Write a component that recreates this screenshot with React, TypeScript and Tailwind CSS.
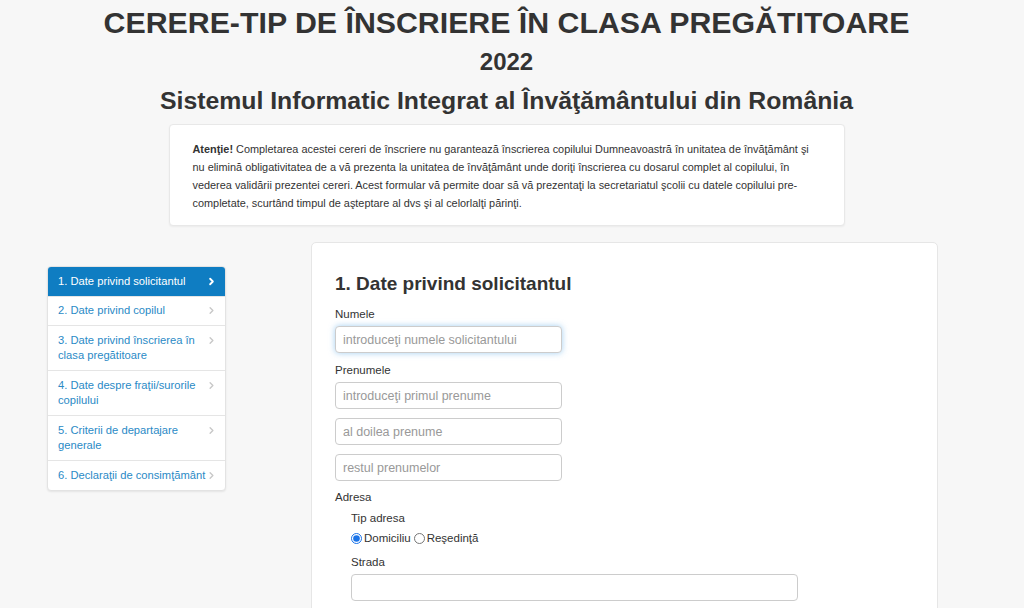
import { ChevronRight } from "lucide-react";

const steps = [
  ["1. Date privind solicitantul"],
  ["2. Date privind copilul"],
  ["3. Date privind înscrierea în", "clasa pregătitoare"],
  ["4. Date despre fraţii/surorile", "copilului"],
  ["5. Criterii de departajare", "generale"],
  ["6. Declaraţii de consimţământ"],
];

const inputCls =
  "block w-[227px] h-[27px] rounded-[4px] border border-[#cccccc] bg-white px-[7px] text-[12.5px] text-[#555] placeholder:text-[#999] outline-none";

export default function App() {
  return (
    <div className="min-h-[608px] bg-[#f7f7f7] text-[#333] font-['Liberation_Sans',Arial,sans-serif] overflow-hidden">
      <div className="w-[1013px]">
        <div className="text-center pt-[5px]">
          <h1 className="text-[30.3px] leading-[36px] font-bold">
            CERERE-TIP DE ÎNSCRIERE ÎN CLASA PREGĂTITOARE
          </h1>
          <h2 className="mt-[6px] text-[24px] leading-[30px] font-bold">2022</h2>
          <h2 className="mt-[9px] text-[24.8px] leading-[30px] font-bold">
            Sistemul Informatic Integrat al Învăţământului din România
          </h2>
        </div>

        <div className="mx-auto mt-[8px] w-[676px] h-[102px] rounded-[4px] border border-[#e8e8e8] bg-white px-[23px] pt-[15px] text-[10.9px] leading-[18px] text-[#333] whitespace-nowrap shadow-[0_1px_2px_rgba(0,0,0,0.05)]">
          <b>Atenţie!</b> Completarea acestei cereri de înscriere nu garantează înscrierea copilului Dumneavoastră în unitatea de învăţământ şi
          <br />
          nu elimină obligativitatea de a vă prezenta la unitatea de învăţământ unde doriţi înscrierea cu dosarul complet al copilului, în
          <br />
          vederea validării prezentei cereri. Acest formular vă permite doar să vă prezentaţi la secretariatul şcolii cu datele copilului pre-
          <br />
          completate, scurtând timpul de aşteptare al dvs şi al celorlalţi părinţi.
        </div>

        <div className="flex items-start mt-[16px] pl-[47px]">
          <nav className="mt-[24px] w-[179px] rounded-[4px] border border-[#e3e3e3] bg-white shadow-[0_1px_2px_rgba(0,0,0,0.08)] overflow-hidden">
            {steps.map((s, i) => (
              <div
                key={s[0]}
                className={
                  i === 0
                    ? "flex items-start justify-between bg-[#0f7dc2] text-white pl-[10px] pr-[8px] py-[6.5px] text-[11.2px] leading-[15.5px]"
                    : "flex items-start justify-between border-t border-[#e5e5e5] text-[#2a8ac6] pl-[10px] pr-[8px] py-[6.5px] text-[11.2px] leading-[15.5px]"
                }
              >
                <span className="whitespace-nowrap">
                  {s[0]}
                  {s[1] && (
                    <>
                      <br />
                      {s[1]}
                    </>
                  )}
                </span>
                <ChevronRight
                  size={11}
                  strokeWidth={i === 0 ? 4 : 3}
                  className={i === 0 ? "mt-[2px] shrink-0 text-white" : "mt-[2px] shrink-0 text-[#c8c8c8]"}
                />
              </div>
            ))}
          </nav>

          <main className="ml-[85px] w-[627px] h-[400px] rounded-[5px] border border-[#e6e6e6] bg-white pl-[23px] pt-[29px]">
            <h3 className="text-[19px] leading-[24px] font-bold text-[#333]">1. Date privind solicitantul</h3>
            <label className="block mt-[11px] text-[11.5px] leading-[14px]">Numele</label>
            <input
              className={inputCls + " mt-[5px] border-[#66afe9] shadow-[0_0_6px_rgba(102,175,233,0.6)]"}
              placeholder="introduceţi numele solicitantului"
            />
            <label className="block mt-[10px] text-[11.5px] leading-[14px]">Prenumele</label>
            <input className={inputCls + " mt-[5px]"} placeholder="introduceţi primul prenume" />
            <input className={inputCls + " mt-[9px]"} placeholder="al doilea prenume" />
            <input className={inputCls + " mt-[9px]"} placeholder="restul prenumelor" />
            <div className="mt-[9px] text-[11.5px] leading-[14px]">Adresa</div>
            <div className="pl-[16px]">
              <div className="mt-[7px] text-[11.5px] leading-[14px]">Tip adresa</div>
              <div className="mt-[6px] flex items-center text-[11.5px] leading-[14px]">
                <input type="radio" name="tip" defaultChecked className="m-0 mr-[2px] w-[11px] h-[11px] accent-[#1a73e8]" />
                <span>Domiciliu</span>
                <input type="radio" name="tip" className="m-0 ml-[3px] mr-[2px] w-[11px] h-[11px]" />
                <span>Reşedinţă</span>
              </div>
              <div className="mt-[10px] text-[11.5px] leading-[14px]">Strada</div>
              <input className={inputCls + " mt-[5px] w-[447px]"} />
            </div>
          </main>
        </div>
      </div>
    </div>
  );
}
